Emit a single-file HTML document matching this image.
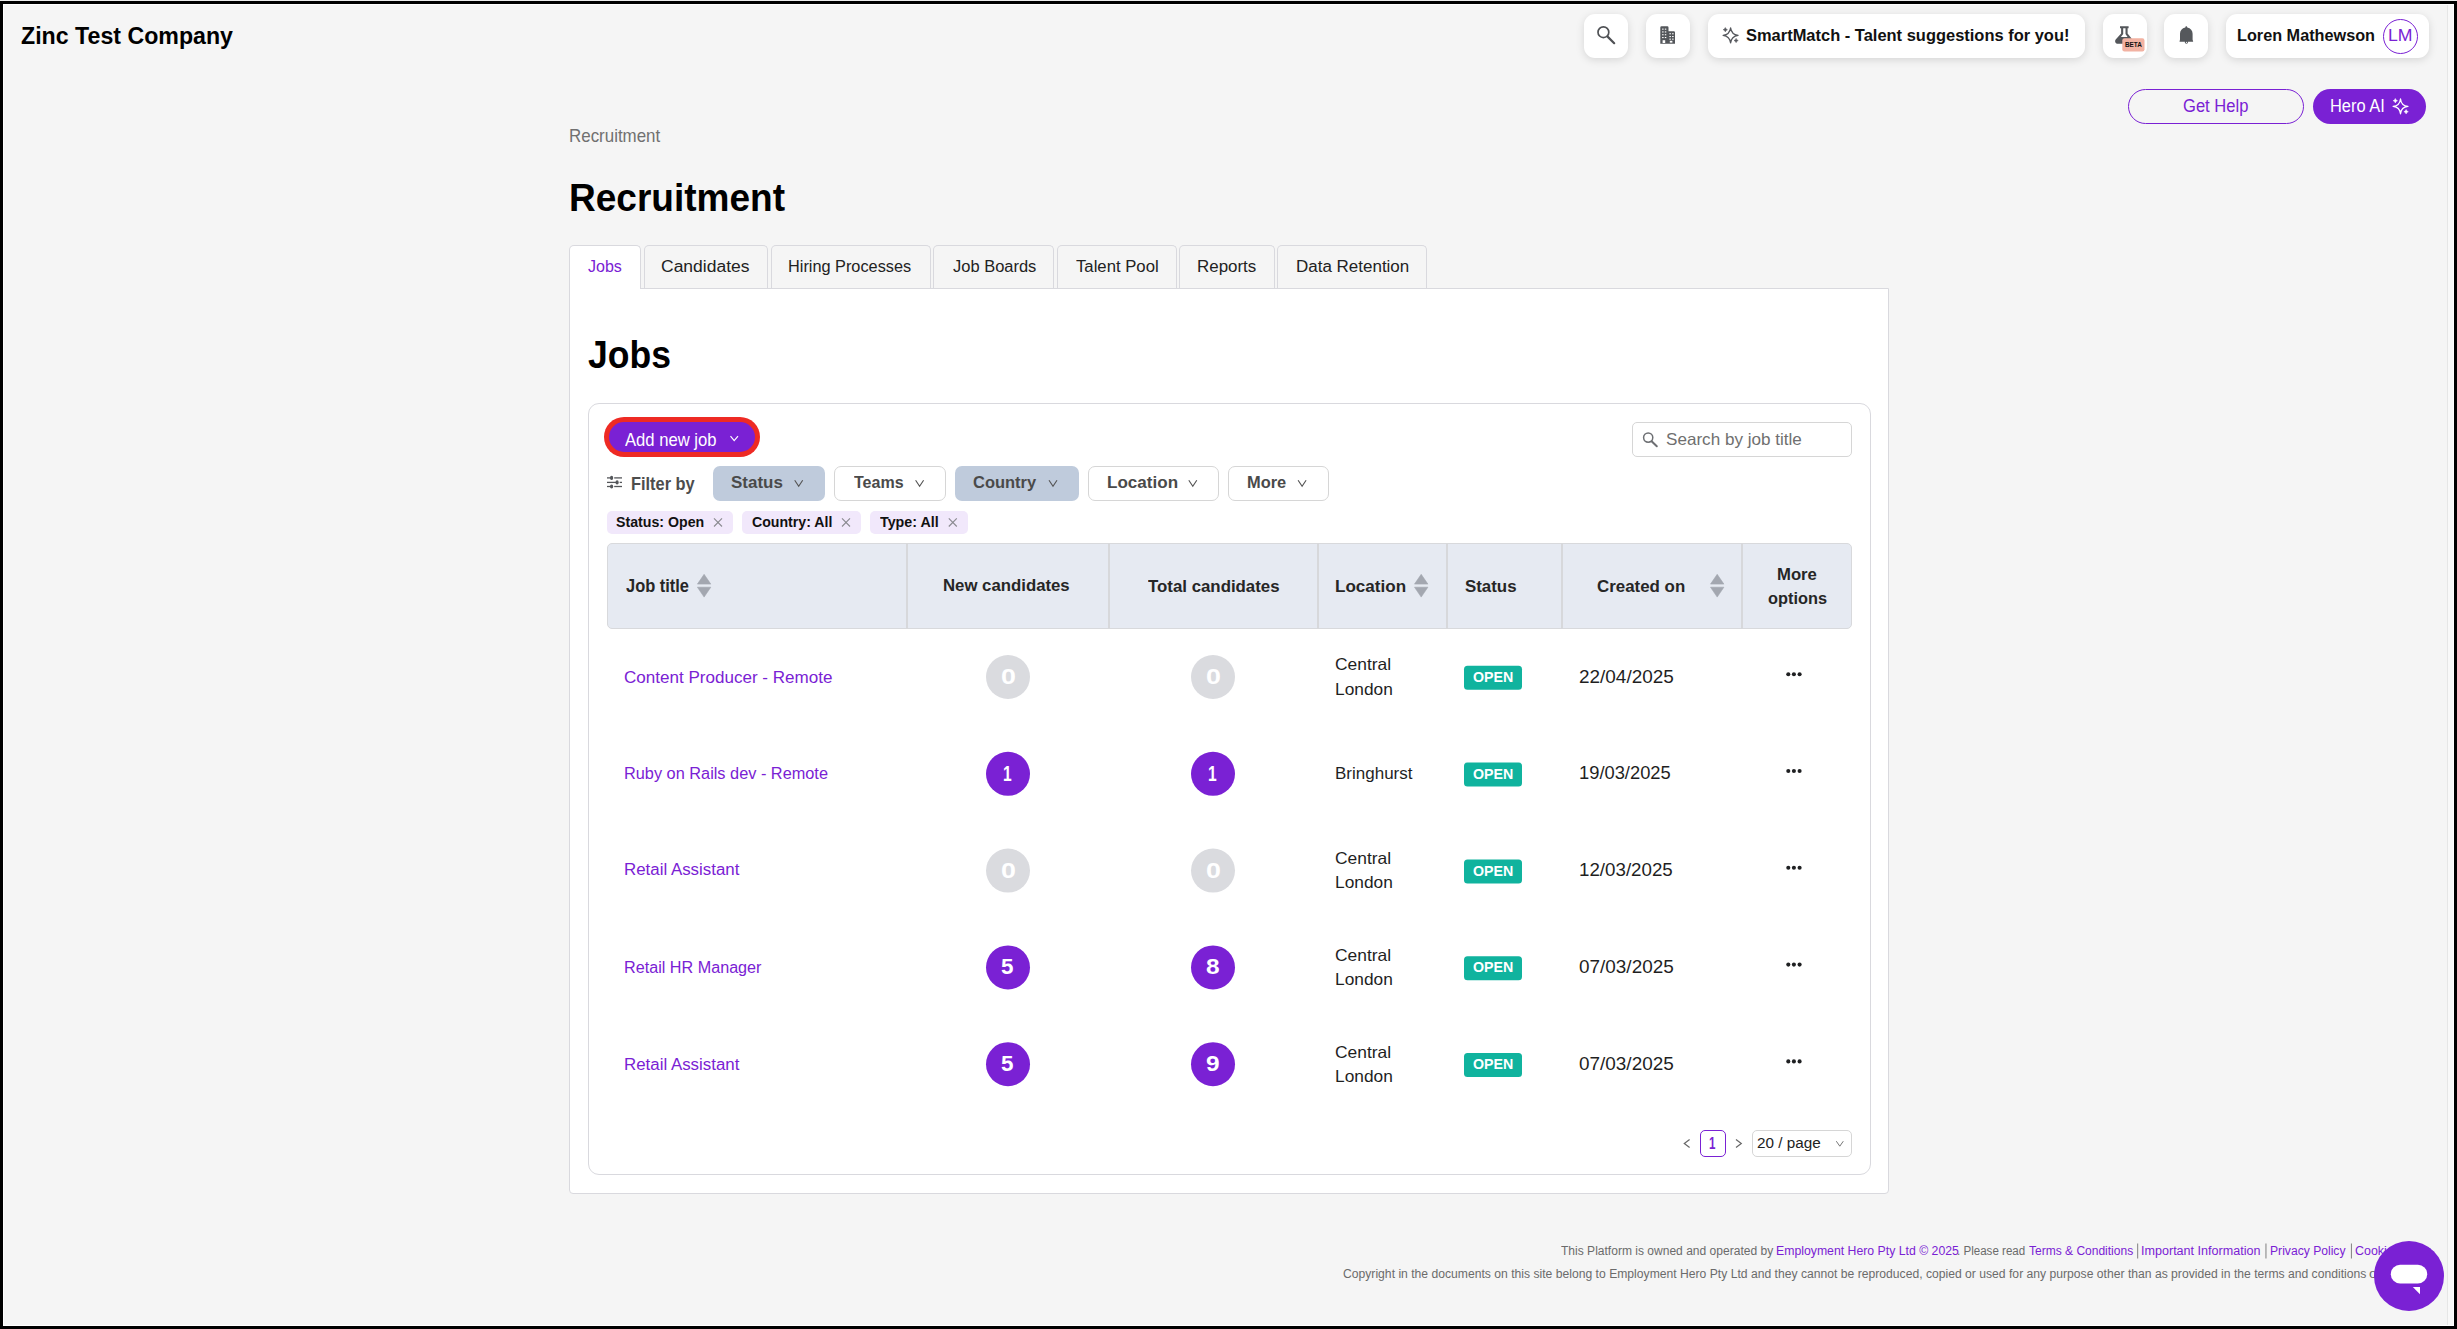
<!DOCTYPE html>
<html><head><meta charset="utf-8">
<style>
*{box-sizing:border-box;margin:0;padding:0}
html,body{width:2457px;height:1329px;overflow:hidden;background:#000;font-family:"Liberation Sans",sans-serif}
.a{position:absolute}
.t{position:absolute;white-space:nowrap;line-height:1;transform-origin:0 0}
#topline{left:0;top:0;width:2457px;height:1px;background:#ececec}
#frame{left:3px;top:4px;width:2451px;height:1322px;border:1px solid #fff;background:#f5f5f5;overflow:hidden}
#sb{left:2447px;top:5px;width:6px;height:1320px;background:#f9f9f9;border-left:1px solid #e6e6e6}
.hb{position:absolute;top:14px;height:44px;background:#fff;border-radius:11px;box-shadow:0 2px 9px rgba(0,0,0,.13)}
.tab{position:absolute;top:245px;height:43px;border:1px solid #d9d9de;border-bottom:none;border-radius:5px 5px 0 0;background:#f5f5f5}
.fb{position:absolute;top:466px;height:35px;border-radius:7px}
.fw{background:#fff;border:1px solid #d6d6d6}
.fg{background:#bfcbdc}
.chip{position:absolute;top:511px;height:23px;border-radius:5px;background:#f1e8fb}
.circ{position:absolute;width:44px;height:44px;border-radius:50%;color:#fff;font-weight:700;text-align:center}
.cg{background:#d9dadd}
.cp{background:#7a21d4}
.open{position:absolute;left:1464px;width:58px;height:24px;border-radius:4px;background:#12b29b}
.vd{position:absolute;top:543px;width:2px;height:86px;background:#d7d8db}
</style></head><body>
<div id="topline" class="a"></div>
<div id="frame" class="a"></div>
<div id="sb" class="a"></div>

<!-- header boxes -->
<div class="hb" style="left:1584px;width:44px"></div>
<div class="hb" style="left:1646px;width:44px"></div>
<div class="hb" style="left:1708px;width:377px"></div>
<div class="hb" style="left:2103px;width:44px"></div>
<div class="hb" style="left:2164px;width:44px"></div>
<div class="hb" style="left:2226px;width:203px"></div>
<div class="a" style="left:2383px;top:19px;width:35px;height:35px;border:1.5px solid #7a21d4;border-radius:50%"></div>

<div class="a" style="left:2128px;top:89px;width:176px;height:35px;border:1.5px solid #7a21d4;border-radius:18px"></div>
<div class="a" style="left:2313px;top:89px;width:113px;height:35px;background:#7a21d4;border-radius:18px"></div>

<!-- tabs -->
<div class="a" style="left:569px;top:288px;width:1320px;height:906px;background:#fff;border:1px solid #d9d9de;border-radius:0 0 4px 4px"></div>
<div class="tab" style="left:569px;width:72px;background:#fff;height:44px"></div>
<div class="tab" style="left:644px;width:124px"></div>
<div class="tab" style="left:771px;width:160px"></div>
<div class="tab" style="left:933px;width:121px"></div>
<div class="tab" style="left:1057px;width:120px"></div>
<div class="tab" style="left:1179px;width:96px"></div>
<div class="tab" style="left:1277px;width:150px"></div>

<!-- card -->
<div class="a" style="left:588px;top:403px;width:1283px;height:772px;border:1px solid #d9d9de;border-radius:11px;background:#fff"></div>
<div class="a" style="left:604px;top:417px;width:156px;height:40px;border-radius:20px;background:#ee2a24"></div>
<div class="a" style="left:609px;top:422px;width:146px;height:30px;border-radius:15px;background:#7a21d4"></div>
<div class="a" style="left:1632px;top:422px;width:220px;height:35px;border:1px solid #d6d6d6;border-radius:5px;background:#fff"></div>

<div class="fb fg" style="left:713px;width:112px"></div>
<div class="fb fw" style="left:834px;width:112px"></div>
<div class="fb fg" style="left:955px;width:124px"></div>
<div class="fb fw" style="left:1088px;width:131px"></div>
<div class="fb fw" style="left:1228px;width:101px"></div>

<div class="chip" style="left:607px;width:126px"></div>
<div class="chip" style="left:742px;width:119px"></div>
<div class="chip" style="left:870px;width:98px"></div>

<!-- table header -->
<div class="a" style="left:607px;top:543px;width:1245px;height:86px;background:#e6eaf2;border:1px solid #d8d9dc;border-radius:5px"></div>
<div class="vd" style="left:906px"></div>
<div class="vd" style="left:1108px"></div>
<div class="vd" style="left:1317px"></div>
<div class="vd" style="left:1446px"></div>
<div class="vd" style="left:1561px"></div>
<div class="vd" style="left:1741px"></div>

<!-- pagination -->
<div class="a" style="left:1700px;top:1130px;width:26px;height:27px;border:1.5px solid #7a21d4;border-radius:5px"></div>
<div class="a" style="left:1752px;top:1130px;width:100px;height:27px;border:1px solid #d6d6d6;border-radius:5px"></div>

<svg class="a" style="left:0;top:0" width="2457" height="1329" viewBox="0 0 2457 1329">
<circle cx="1603.4" cy="32.2" r="5.4" fill="none" stroke="#4f5155" stroke-width="1.7"/>
<line x1="1607.6" y1="36.6" x2="1614.2" y2="43.2" stroke="#4f5155" stroke-width="2.2" stroke-linecap="round"/>
<path d="M1661.5,26.3 h5.8 a1.2,1.2 0 0 1 1.2,1.2 V31.2 h5.3 a1.2,1.2 0 0 1 1.2,1.2 V43.8 H1660.3 V27.5 a1.2,1.2 0 0 1 1.2,-1.2 Z" fill="#53565a"/>
<rect x="1662.1" y="28.6" width="1.5" height="1.1" fill="#fff"/>
<rect x="1664.8" y="28.6" width="1.5" height="1.1" fill="#fff"/>
<rect x="1662.1" y="31.4" width="1.5" height="1.1" fill="#fff"/>
<rect x="1664.8" y="31.4" width="1.5" height="1.1" fill="#fff"/>
<rect x="1662.1" y="34.2" width="1.5" height="1.1" fill="#fff"/>
<rect x="1664.8" y="34.2" width="1.5" height="1.1" fill="#fff"/>
<rect x="1662.1" y="37.0" width="1.5" height="1.1" fill="#fff"/>
<rect x="1664.8" y="37.0" width="1.5" height="1.1" fill="#fff"/>
<rect x="1669.4" y="33.2" width="1.5" height="1.1" fill="#fff"/>
<rect x="1672.1" y="33.2" width="1.5" height="1.1" fill="#fff"/>
<rect x="1669.4" y="36.0" width="1.5" height="1.1" fill="#fff"/>
<rect x="1672.1" y="36.0" width="1.5" height="1.1" fill="#fff"/>
<rect x="1669.4" y="38.6" width="1.5" height="1.1" fill="#fff"/>
<rect x="1672.1" y="38.6" width="1.5" height="1.1" fill="#fff"/>
<rect x="1662.6" y="40.2" width="2.6" height="2.8" fill="#fff"/>
<rect x="1669.8" y="40.8" width="2.6" height="1.8" fill="#fff"/>
<path d="M1730.6,27.799999999999997 Q1731.4499999999998,34.449999999999996 1738.1,35.3 Q1731.4499999999998,36.15 1730.6,42.8 Q1729.75,36.15 1723.1,35.3 Q1729.75,34.449999999999996 1730.6,27.799999999999997 Z" fill="none" stroke="#55585d" stroke-width="1.25" stroke-linejoin="round"/>
<path d="M1725.3,27.599999999999998 Q1725.6499999999999,29.349999999999998 1727.3999999999999,29.7 Q1725.6499999999999,30.05 1725.3,31.8 Q1724.95,30.05 1723.2,29.7 Q1724.95,29.349999999999998 1725.3,27.599999999999998 Z" fill="#55585d" stroke="#55585d" stroke-width="0.6"/>
<path d="M1736.1,38.4 Q1736.4499999999998,40.15 1738.1999999999998,40.5 Q1736.4499999999998,40.85 1736.1,42.6 Q1735.75,40.85 1734.0,40.5 Q1735.75,40.15 1736.1,38.4 Z" fill="#55585d" stroke="#55585d" stroke-width="0.6"/>
<path d="M2120,26.2 H2128.6 V28.2 H2127.6 V33.4 L2131.6,38.4 V43.8 H2118.2 C2115.4,43.8 2114.2,41.2 2115.9,39.2 L2121.1,33.4 V28.2 H2120 Z" fill="#53565a"/>
<path d="M2123.2,28.2 H2125.5 V33.9 L2127.6,36.9 H2120.9 L2123.2,33.9 Z" fill="#fff"/>
<rect x="2122.3" y="38.3" width="22.2" height="13.2" rx="2.2" fill="#f2b2a2"/>
<text x="2124.9" y="47.1" font-family="Liberation Sans" font-weight="700" font-size="7.1" fill="#111" textLength="17" lengthAdjust="spacingAndGlyphs">BETA</text>
<path d="M2185.3,27.4 C2185.4,26.8 2185.8,26.3 2186.3,26.3 C2186.8,26.3 2187.2,26.8 2187.3,27.4 C2190.6,28.0 2192.6,30.4 2192.6,33.8 V39.4 L2193.2,41.7 H2179.5 L2180.0,39.4 V33.8 C2180.0,30.4 2182.0,28.0 2185.3,27.4 Z" fill="#55585c"/>
<circle cx="2186.4" cy="42.0" r="1.65" fill="#55585c"/>
<circle cx="2186.4" cy="42.4" r="0.55" fill="#fff"/>
<path d="M2400.5,99.0 Q2401.2,105.7 2407.9,106.4 Q2401.2,107.10000000000001 2400.5,113.80000000000001 Q2399.8,107.10000000000001 2393.1,106.4 Q2399.8,105.7 2400.5,99.0 Z" fill="none" stroke="#fff" stroke-width="1.3" stroke-linejoin="round"/>
<path d="M2395.3,98.5 Q2395.65,100.35000000000001 2397.5,100.7 Q2395.65,101.05 2395.3,102.9 Q2394.9500000000003,101.05 2393.1000000000004,100.7 Q2394.9500000000003,100.35000000000001 2395.3,98.5 Z" fill="#fff" stroke="#fff" stroke-width="0.5"/>
<path d="M2406.1,109.5 Q2406.45,111.35000000000001 2408.2999999999997,111.7 Q2406.45,112.05 2406.1,113.9 Q2405.75,112.05 2403.9,111.7 Q2405.75,111.35000000000001 2406.1,109.5 Z" fill="#fff" stroke="#fff" stroke-width="0.5"/>
<polyline points="730.5,436.2 734.2,440.6 738,436.2" fill="none" stroke="#fff" stroke-width="1.2"/>
<circle cx="1648.2" cy="437.6" r="4.6" fill="none" stroke="#6d6f73" stroke-width="1.5"/>
<line x1="1651.6" y1="441.2" x2="1656.8" y2="446.3" stroke="#6d6f73" stroke-width="2" stroke-linecap="round"/>
<line x1="607" y1="477.9" x2="611.6" y2="477.9" stroke="#54565a" stroke-width="1.3"/>
<line x1="614.2" y1="477.9" x2="622" y2="477.9" stroke="#54565a" stroke-width="1.3"/>
<ellipse cx="611.6" cy="477.9" rx="1.6" ry="2.1" fill="#54565a"/>
<line x1="607" y1="482.4" x2="617.1" y2="482.4" stroke="#54565a" stroke-width="1.3"/>
<line x1="619.7" y1="482.4" x2="622" y2="482.4" stroke="#54565a" stroke-width="1.3"/>
<ellipse cx="617.1" cy="482.4" rx="1.6" ry="2.1" fill="#54565a"/>
<line x1="607" y1="486.5" x2="611.6" y2="486.5" stroke="#54565a" stroke-width="1.3"/>
<line x1="614.2" y1="486.5" x2="622" y2="486.5" stroke="#54565a" stroke-width="1.3"/>
<ellipse cx="611.6" cy="486.5" rx="1.6" ry="2.1" fill="#54565a"/>
<polyline points="794.7,480.3 798.7,486.2 802.7,480.3" fill="none" stroke="#555" stroke-width="1.15"/>
<polyline points="915.6,480.3 919.6,486.2 923.6,480.3" fill="none" stroke="#555" stroke-width="1.15"/>
<polyline points="1049.0,480.3 1053.0,486.2 1057.0,480.3" fill="none" stroke="#555" stroke-width="1.15"/>
<polyline points="1188.8,480.3 1192.8,486.2 1196.8,480.3" fill="none" stroke="#555" stroke-width="1.15"/>
<polyline points="1298.1,480.3 1302.1,486.2 1306.1,480.3" fill="none" stroke="#555" stroke-width="1.15"/>
<path d="M714.0,518.4 L722.0,526.5 M722.0,518.4 L714.0,526.5" stroke="#8a8a90" stroke-width="1.1"/>
<path d="M842.0,518.4 L850.0,526.5 M850.0,518.4 L842.0,526.5" stroke="#8a8a90" stroke-width="1.1"/>
<path d="M948.8,518.4 L956.8,526.5 M956.8,518.4 L948.8,526.5" stroke="#8a8a90" stroke-width="1.1"/>
<path d="M704.1,574.3 L710.8000000000001,584.1 L697.4,584.1 Z M697.4,587.2 L710.8000000000001,587.2 L704.1,597.1 Z" fill="#a3a7b0" stroke="#a3a7b0" stroke-width="0.6" stroke-linejoin="round"/>
<path d="M1421.2,574.3 L1427.9,584.1 L1414.5,584.1 Z M1414.5,587.2 L1427.9,587.2 L1421.2,597.1 Z" fill="#a3a7b0" stroke="#a3a7b0" stroke-width="0.6" stroke-linejoin="round"/>
<path d="M1717.2,574.3 L1723.9,584.1 L1710.5,584.1 Z M1710.5,587.2 L1723.9,587.2 L1717.2,597.1 Z" fill="#a3a7b0" stroke="#a3a7b0" stroke-width="0.6" stroke-linejoin="round"/>
<circle cx="1008" cy="677.0" r="22" fill="#dadbdf"/>
<circle cx="1213" cy="677.0" r="22" fill="#dadbdf"/>
<rect x="1464" y="665.8" width="58" height="24" rx="3.5" fill="#10b39e"/>
<circle cx="1788.3" cy="674.2" r="2.05" fill="#1f2022"/>
<circle cx="1793.9" cy="674.2" r="2.05" fill="#1f2022"/>
<circle cx="1799.6" cy="674.2" r="2.05" fill="#1f2022"/>
<circle cx="1008" cy="773.8" r="22" fill="#7a21d4"/>
<circle cx="1213" cy="773.8" r="22" fill="#7a21d4"/>
<rect x="1464" y="762.6" width="58" height="24" rx="3.5" fill="#10b39e"/>
<circle cx="1788.3" cy="771.0" r="2.05" fill="#1f2022"/>
<circle cx="1793.9" cy="771.0" r="2.05" fill="#1f2022"/>
<circle cx="1799.6" cy="771.0" r="2.05" fill="#1f2022"/>
<circle cx="1008" cy="870.6" r="22" fill="#dadbdf"/>
<circle cx="1213" cy="870.6" r="22" fill="#dadbdf"/>
<rect x="1464" y="859.4" width="58" height="24" rx="3.5" fill="#10b39e"/>
<circle cx="1788.3" cy="867.8" r="2.05" fill="#1f2022"/>
<circle cx="1793.9" cy="867.8" r="2.05" fill="#1f2022"/>
<circle cx="1799.6" cy="867.8" r="2.05" fill="#1f2022"/>
<circle cx="1008" cy="967.4" r="22" fill="#7a21d4"/>
<circle cx="1213" cy="967.4" r="22" fill="#7a21d4"/>
<rect x="1464" y="956.2" width="58" height="24" rx="3.5" fill="#10b39e"/>
<circle cx="1788.3" cy="964.6" r="2.05" fill="#1f2022"/>
<circle cx="1793.9" cy="964.6" r="2.05" fill="#1f2022"/>
<circle cx="1799.6" cy="964.6" r="2.05" fill="#1f2022"/>
<circle cx="1008" cy="1064.2" r="22" fill="#7a21d4"/>
<circle cx="1213" cy="1064.2" r="22" fill="#7a21d4"/>
<rect x="1464" y="1053.0" width="58" height="24" rx="3.5" fill="#10b39e"/>
<circle cx="1788.3" cy="1061.4" r="2.05" fill="#1f2022"/>
<circle cx="1793.9" cy="1061.4" r="2.05" fill="#1f2022"/>
<circle cx="1799.6" cy="1061.4" r="2.05" fill="#1f2022"/>
<polyline points="1689.6,1139.5 1684.3,1143.5 1689.6,1147.5" fill="none" stroke="#666" stroke-width="1.2"/>
<polyline points="1736,1139.5 1741.3,1143.5 1736,1147.5" fill="none" stroke="#666" stroke-width="1.2"/>
<polyline points="1836.3,1141.2 1839.8,1146.2 1843.3,1141.2" fill="none" stroke="#777" stroke-width="1"/>
<rect x="2137.1" y="1243.5" width="1.1" height="15" fill="#8a8a8a"/>
<rect x="2265.4" y="1243.5" width="1.1" height="15" fill="#8a8a8a"/>
<rect x="2350.9" y="1243.5" width="1.1" height="15" fill="#8a8a8a"/>
</svg>
<span class="t" style="left:20.50px;top:23.90px;font-size:24.56px;font-weight:700;color:#000;transform:scaleX(0.9438);">Zinc Test Company</span>
<span class="t" style="left:1746.20px;top:27.22px;font-size:16.28px;font-weight:700;color:#111;transform:scaleX(1.0120);">SmartMatch - Talent suggestions for you!</span>
<span class="t" style="left:2236.80px;top:26.70px;font-size:17.01px;font-weight:700;color:#111;transform:scaleX(0.9550);">Loren Mathewson</span>
<span class="t" style="left:2388.20px;top:26.70px;font-size:17.01px;font-weight:400;color:#7a21d4;transform:scaleX(1.0390);">LM</span>
<span class="t" style="left:2183.30px;top:98.43px;font-size:17.44px;font-weight:400;color:#7a21d4;transform:scaleX(0.9496);">Get Help</span>
<span class="t" style="left:2329.90px;top:98.43px;font-size:17.44px;font-weight:400;color:#fff;transform:scaleX(0.9421);">Hero AI</span>
<span class="t" style="left:569.00px;top:128.16px;font-size:17.88px;font-weight:400;color:#707070;transform:scaleX(0.9474);">Recruitment</span>
<span class="t" style="left:568.50px;top:177.65px;font-size:39.39px;font-weight:700;color:#000;transform:scaleX(0.9401);">Recruitment</span>
<span class="t" style="left:587.70px;top:258.06px;font-size:17.30px;font-weight:400;color:#7a21d4;transform:scaleX(0.9279);">Jobs</span>
<span class="t" style="left:661.20px;top:258.06px;font-size:17.30px;font-weight:400;color:#222;transform:scaleX(1.0119);">Candidates</span>
<span class="t" style="left:788.20px;top:258.06px;font-size:17.30px;font-weight:400;color:#222;transform:scaleX(0.9427);">Hiring Processes</span>
<span class="t" style="left:952.80px;top:258.06px;font-size:17.30px;font-weight:400;color:#222;transform:scaleX(0.9536);">Job Boards</span>
<span class="t" style="left:1075.90px;top:258.06px;font-size:17.30px;font-weight:400;color:#222;transform:scaleX(0.9668);">Talent Pool</span>
<span class="t" style="left:1197.10px;top:258.06px;font-size:17.30px;font-weight:400;color:#222;transform:scaleX(0.9798);">Reports</span>
<span class="t" style="left:1295.80px;top:258.06px;font-size:17.30px;font-weight:400;color:#222;transform:scaleX(0.9824);">Data Retention</span>
<span class="t" style="left:587.70px;top:335.27px;font-size:39.24px;font-weight:700;color:#000;transform:scaleX(0.9056);">Jobs</span>
<span class="t" style="left:625.00px;top:431.83px;font-size:17.44px;font-weight:400;color:#fff;transform:scaleX(0.9538);">Add new job</span>
<span class="t" style="left:1665.70px;top:432.35px;font-size:16.72px;font-weight:400;color:#6f6f6f;transform:scaleX(1.0229);">Search by job title</span>
<span class="t" style="left:630.90px;top:476.49px;font-size:17.73px;font-weight:700;color:#4d4d4d;transform:scaleX(0.9236);">Filter by</span>
<span class="t" style="left:730.60px;top:474.08px;font-size:17.15px;font-weight:700;color:#4a4a4a;transform:scaleX(0.9892);">Status</span>
<span class="t" style="left:853.80px;top:474.08px;font-size:17.15px;font-weight:700;color:#4a4a4a;transform:scaleX(0.9348);">Teams</span>
<span class="t" style="left:973.30px;top:473.90px;font-size:17.01px;font-weight:700;color:#4a4a4a;transform:scaleX(0.9688);">Country</span>
<span class="t" style="left:1106.80px;top:473.90px;font-size:17.01px;font-weight:700;color:#4a4a4a;transform:scaleX(1.0033);">Location</span>
<span class="t" style="left:1246.80px;top:473.90px;font-size:17.01px;font-weight:700;color:#4a4a4a;transform:scaleX(0.9645);">More</span>
<span class="t" style="left:616.30px;top:514.48px;font-size:15.26px;font-weight:700;color:#111;transform:scaleX(0.9291);">Status: Open</span>
<span class="t" style="left:751.80px;top:514.48px;font-size:15.26px;font-weight:700;color:#111;transform:scaleX(0.9271);">Country: All</span>
<span class="t" style="left:880.10px;top:514.48px;font-size:15.26px;font-weight:700;color:#111;transform:scaleX(0.9355);">Type: All</span>
<span class="t" style="left:625.60px;top:576.54px;font-size:18.02px;font-weight:700;color:#262626;transform:scaleX(0.9118);">Job title</span>
<span class="t" style="left:943.20px;top:577.40px;font-size:17.01px;font-weight:700;color:#262626;transform:scaleX(0.9859);">New candidates</span>
<span class="t" style="left:1147.60px;top:577.52px;font-size:16.28px;font-weight:700;color:#262626;transform:scaleX(1.0347);">Total candidates</span>
<span class="t" style="left:1335.00px;top:577.52px;font-size:16.28px;font-weight:700;color:#262626;transform:scaleX(1.0486);">Location</span>
<span class="t" style="left:1464.90px;top:577.52px;font-size:16.28px;font-weight:700;color:#262626;transform:scaleX(1.0372);">Status</span>
<span class="t" style="left:1596.50px;top:577.52px;font-size:16.28px;font-weight:700;color:#262626;transform:scaleX(1.0383);">Created on</span>
<span class="t" style="left:1777.10px;top:566.59px;font-size:15.84px;font-weight:700;color:#262626;transform:scaleX(1.0548);">More</span>
<span class="t" style="left:1767.90px;top:590.59px;font-size:15.84px;font-weight:700;color:#262626;transform:scaleX(1.0323);">options</span>
<span class="t" style="left:1757.00px;top:1136.17px;font-size:14.68px;font-weight:400;color:#222;transform:scaleX(1.0402);">20 / page</span>
<span class="t" style="left:623.50px;top:668.69px;font-size:16.42px;font-weight:400;color:#7a21d4;transform:scaleX(1.0390);">Content Producer - Remote</span>
<span class="t" style="left:1334.80px;top:656.42px;font-size:16.28px;font-weight:400;color:#1f1f1f;transform:scaleX(1.0708);">Central</span>
<span class="t" style="left:1334.80px;top:680.50px;font-size:17.01px;font-weight:400;color:#1f1f1f;transform:scaleX(1.0188);">London</span>
<span class="t" style="left:1578.60px;top:668.59px;font-size:17.73px;font-weight:400;color:#1f1f1f;transform:scaleX(1.0691);">22/04/2025</span>
<span class="t" style="left:623.50px;top:765.49px;font-size:16.42px;font-weight:400;color:#7a21d4;transform:scaleX(0.9941);">Ruby on Rails dev - Remote</span>
<span class="t" style="left:1334.80px;top:765.49px;font-size:16.42px;font-weight:400;color:#1f1f1f;transform:scaleX(1.0360);">Bringhurst</span>
<span class="t" style="left:1578.60px;top:765.39px;font-size:17.73px;font-weight:400;color:#1f1f1f;transform:scaleX(1.0346);">19/03/2025</span>
<span class="t" style="left:623.50px;top:861.49px;font-size:16.42px;font-weight:400;color:#7a21d4;transform:scaleX(1.0289);">Retail Assistant</span>
<span class="t" style="left:1334.80px;top:850.02px;font-size:16.28px;font-weight:400;color:#1f1f1f;transform:scaleX(1.0708);">Central</span>
<span class="t" style="left:1334.80px;top:874.10px;font-size:17.01px;font-weight:400;color:#1f1f1f;transform:scaleX(1.0188);">London</span>
<span class="t" style="left:1578.60px;top:862.19px;font-size:17.73px;font-weight:400;color:#1f1f1f;transform:scaleX(1.0575);">12/03/2025</span>
<span class="t" style="left:623.50px;top:959.09px;font-size:16.42px;font-weight:400;color:#7a21d4;transform:scaleX(0.9855);">Retail HR Manager</span>
<span class="t" style="left:1334.80px;top:946.82px;font-size:16.28px;font-weight:400;color:#1f1f1f;transform:scaleX(1.0708);">Central</span>
<span class="t" style="left:1334.80px;top:970.90px;font-size:17.01px;font-weight:400;color:#1f1f1f;transform:scaleX(1.0188);">London</span>
<span class="t" style="left:1578.60px;top:958.99px;font-size:17.73px;font-weight:400;color:#1f1f1f;transform:scaleX(1.0683);">07/03/2025</span>
<span class="t" style="left:623.50px;top:1055.89px;font-size:16.42px;font-weight:400;color:#7a21d4;transform:scaleX(1.0289);">Retail Assistant</span>
<span class="t" style="left:1334.80px;top:1043.62px;font-size:16.28px;font-weight:400;color:#1f1f1f;transform:scaleX(1.0708);">Central</span>
<span class="t" style="left:1334.80px;top:1067.70px;font-size:17.01px;font-weight:400;color:#1f1f1f;transform:scaleX(1.0188);">London</span>
<span class="t" style="left:1578.60px;top:1055.79px;font-size:17.73px;font-weight:400;color:#1f1f1f;transform:scaleX(1.0683);">07/03/2025</span>
<span class="t" style="left:1000.50px;top:665.00px;font-size:22.67px;font-weight:700;color:#fff;transform:scaleX(1.1818);">0</span>
<span class="t" style="left:1205.50px;top:665.00px;font-size:22.67px;font-weight:700;color:#fff;transform:scaleX(1.1818);">0</span>
<span class="t" style="left:1473.00px;top:670.02px;font-size:14.97px;font-weight:700;color:#fff;transform:scaleX(0.9500);">OPEN</span>
<span class="t" style="left:1003.40px;top:761.80px;font-size:22.67px;font-weight:700;color:#fff;transform:scaleX(0.6863);">1</span>
<span class="t" style="left:1208.40px;top:761.80px;font-size:22.67px;font-weight:700;color:#fff;transform:scaleX(0.6863);">1</span>
<span class="t" style="left:1473.00px;top:766.82px;font-size:14.97px;font-weight:700;color:#fff;transform:scaleX(0.9500);">OPEN</span>
<span class="t" style="left:1000.50px;top:858.60px;font-size:22.67px;font-weight:700;color:#fff;transform:scaleX(1.1818);">0</span>
<span class="t" style="left:1205.50px;top:858.60px;font-size:22.67px;font-weight:700;color:#fff;transform:scaleX(1.1818);">0</span>
<span class="t" style="left:1473.00px;top:863.62px;font-size:14.97px;font-weight:700;color:#fff;transform:scaleX(0.9500);">OPEN</span>
<span class="t" style="left:1000.90px;top:955.40px;font-size:22.67px;font-weight:700;color:#fff;transform:scaleX(0.9875);">5</span>
<span class="t" style="left:1206.00px;top:955.40px;font-size:22.67px;font-weight:700;color:#fff;transform:scaleX(1.0759);">8</span>
<span class="t" style="left:1473.00px;top:960.42px;font-size:14.97px;font-weight:700;color:#fff;transform:scaleX(0.9500);">OPEN</span>
<span class="t" style="left:1000.90px;top:1052.20px;font-size:22.67px;font-weight:700;color:#fff;transform:scaleX(0.9875);">5</span>
<span class="t" style="left:1206.00px;top:1052.20px;font-size:22.67px;font-weight:700;color:#fff;transform:scaleX(1.0759);">9</span>
<span class="t" style="left:1473.00px;top:1057.22px;font-size:14.97px;font-weight:700;color:#fff;transform:scaleX(0.9500);">OPEN</span>
<span class="t" style="left:1709.00px;top:1136.12px;font-size:16.86px;font-weight:700;color:#7a21d4;transform:scaleX(0.6887);">1</span>
<span class="t" style="left:1561.20px;top:1244.02px;font-size:13.08px;font-weight:400;color:#6b6b6b;transform:scaleX(0.9209);">This Platform is owned and operated by</span>
<span class="t" style="left:1775.50px;top:1244.02px;font-size:13.08px;font-weight:400;color:#7a21d4;transform:scaleX(0.9378);">Employment Hero Pty Ltd &copy; 2025</span>
<span class="t" style="left:1957.20px;top:1244.02px;font-size:13.08px;font-weight:400;color:#6b6b6b;transform:scaleX(0.8855);">. Please read</span>
<span class="t" style="left:2028.90px;top:1244.02px;font-size:13.08px;font-weight:400;color:#7a21d4;transform:scaleX(0.9186);">Terms &amp; Conditions</span>
<span class="t" style="left:2141.10px;top:1244.02px;font-size:13.08px;font-weight:400;color:#7a21d4;transform:scaleX(0.9610);">Important Information</span>
<span class="t" style="left:2270.00px;top:1244.02px;font-size:13.08px;font-weight:400;color:#7a21d4;transform:scaleX(0.9276);">Privacy Policy</span>
<span class="t" style="left:2355.10px;top:1244.02px;font-size:13.08px;font-weight:400;color:#7a21d4;transform:scaleX(0.9520);">Cookie Policy</span>
<span class="t" style="left:1342.50px;top:1267.12px;font-size:13.08px;font-weight:400;color:#6b6b6b;transform:scaleX(0.9291);">Copyright in the documents on this site belong to Employment Hero Pty Ltd and they cannot be reproduced, copied or used for any purpose other than as provided in the terms and conditions</span>
<span class="t" style="left:2368.90px;top:1267.12px;font-size:13.08px;font-weight:400;color:#6b6b6b;transform:scaleX(1.0863);">of</span>

<!-- chat -->
<svg class="a" style="left:2374px;top:1241px" width="70" height="70" viewBox="0 0 70 70"><circle cx="35" cy="35" r="35" fill="#7a21d4"/><rect x="16.8" y="23.8" width="36.4" height="18.7" rx="9.35" fill="#fff"/><path d="M38.8,46 L46,46 L46,53.3 Z" fill="#fff"/></svg>
</body></html>
